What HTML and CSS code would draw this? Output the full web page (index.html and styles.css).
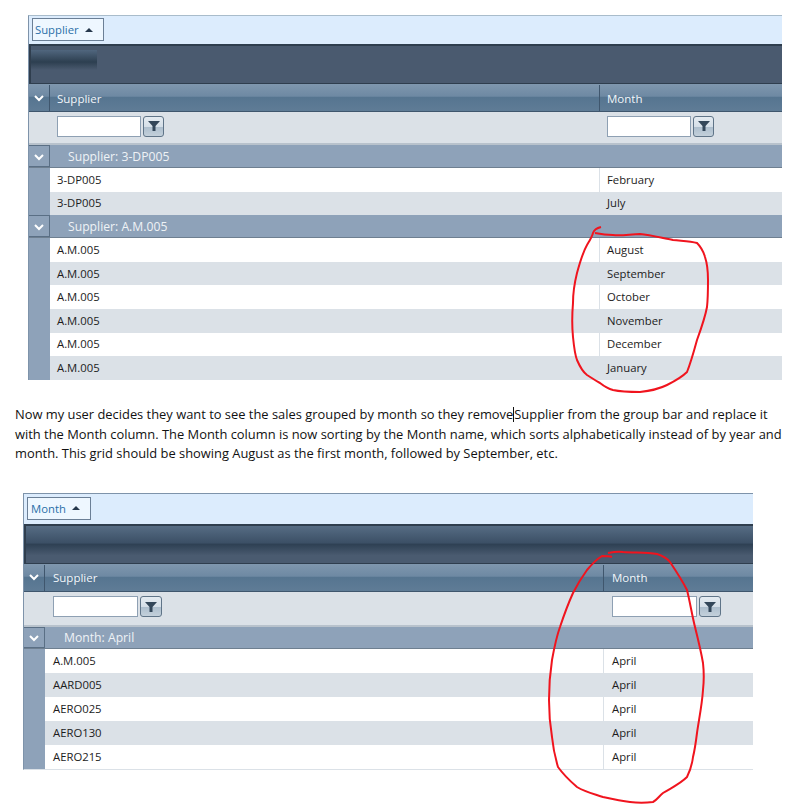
FILE: index.html
```html
<!DOCTYPE html>
<html lang="en">
<head>
<meta charset="utf-8">
<title>Grid grouping</title>
<link rel="stylesheet" href="styles.css">
</head>
<body>
<div class="page">
  <section class="grid grid-a">
    <div class="groupbar"><span class="chip">Supplier <svg class="tri" viewBox="0 0 8 4" width="8" height="4"><path d="M0 4 4 0 8 4z"/></svg></span></div>
    <div class="band"><div class="band-blur"></div></div>
    <div class="row header">
      <div class="strip"><svg class="chev" viewBox="0 0 10 7" width="10" height="7"><path d="M1 1 5 5 9 1"/></svg></div>
      <div class="col c1">Supplier</div><div class="col c2">Month</div>
    </div>
    <div class="row filter">
      <div class="strip"></div>
      <div class="col c1"><span class="input"></span><span class="fbtn"><svg viewBox="0 0 12 12" width="12" height="12"><path d="M0 1H12L7.500 6V11H4.500V6z"/></svg></span></div>
      <div class="col c2"><span class="input"></span><span class="fbtn"><svg viewBox="0 0 12 12" width="12" height="12"><path d="M0 1H12L7.500 6V11H4.500V6z"/></svg></span></div>
    </div>
    <div class="row group"><div class="strip"><svg class="chev" viewBox="0 0 10 7" width="10" height="7"><path d="M1 1 5 5 9 1"/></svg></div><div class="gtitle">Supplier: 3-DP005</div></div>
    <div class="row data"><div class="strip"></div><div class="col c1">3-DP005</div><div class="col c2">February</div></div>
    <div class="row data alt"><div class="strip"></div><div class="col c1">3-DP005</div><div class="col c2">July</div></div>
    <div class="row group"><div class="strip"><svg class="chev" viewBox="0 0 10 7" width="10" height="7"><path d="M1 1 5 5 9 1"/></svg></div><div class="gtitle">Supplier: A.M.005</div></div>
    <div class="row data"><div class="strip"></div><div class="col c1">A.M.005</div><div class="col c2">August</div></div>
    <div class="row data alt"><div class="strip"></div><div class="col c1">A.M.005</div><div class="col c2">September</div></div>
    <div class="row data"><div class="strip"></div><div class="col c1">A.M.005</div><div class="col c2">October</div></div>
    <div class="row data alt"><div class="strip"></div><div class="col c1">A.M.005</div><div class="col c2">November</div></div>
    <div class="row data"><div class="strip"></div><div class="col c1">A.M.005</div><div class="col c2">December</div></div>
    <div class="row data alt"><div class="strip"></div><div class="col c1">A.M.005</div><div class="col c2">January</div></div>
  </section>

  <p class="note">Now my user decides they want to see the sales grouped by month so they remove<span class="caret"></span>Supplier from the group bar and replace it<br>with the Month column. The Month column is now sorting by the Month name, which sorts alphabetically instead of by year and<br>month. This grid should be showing August as the first month, followed by September, etc.</p>

  <section class="grid grid-b">
    <div class="groupbar"><span class="chip">Month <svg class="tri" viewBox="0 0 8 4" width="8" height="4"><path d="M0 4 4 0 8 4z"/></svg></span></div>
    <div class="band"></div>
    <div class="row header">
      <div class="strip"><svg class="chev" viewBox="0 0 10 7" width="10" height="7"><path d="M1 1 5 5 9 1"/></svg></div>
      <div class="col c1">Supplier</div><div class="col c2">Month</div>
    </div>
    <div class="row filter">
      <div class="strip"></div>
      <div class="col c1"><span class="input"></span><span class="fbtn"><svg viewBox="0 0 12 12" width="12" height="12"><path d="M0 1H12L7.500 6V11H4.500V6z"/></svg></span></div>
      <div class="col c2"><span class="input"></span><span class="fbtn"><svg viewBox="0 0 12 12" width="12" height="12"><path d="M0 1H12L7.500 6V11H4.500V6z"/></svg></span></div>
    </div>
    <div class="row group"><div class="strip"><svg class="chev" viewBox="0 0 10 7" width="10" height="7"><path d="M1 1 5 5 9 1"/></svg></div><div class="gtitle">Month: April</div></div>
    <div class="row data"><div class="strip"></div><div class="col c1">A.M.005</div><div class="col c2">April</div></div>
    <div class="row data alt"><div class="strip"></div><div class="col c1">AARD005</div><div class="col c2">April</div></div>
    <div class="row data"><div class="strip"></div><div class="col c1">AERO025</div><div class="col c2">April</div></div>
    <div class="row data alt"><div class="strip"></div><div class="col c1">AERO130</div><div class="col c2">April</div></div>
    <div class="row data"><div class="strip"></div><div class="col c1">AERO215</div><div class="col c2">April</div></div>
  </section>

  <svg class="ink" viewBox="0 0 791 812" width="791" height="812">
    <path d="M601 227C597 228 594 230 593 233C592 237 590 240 587 245C583 252 580 262 577 273C574 285 573 295 573 303C572 315 572 327 573 337C574 347 575 355 577 360C580 367 583 372 587 375C592 378 596 381 600 383C605 387 609 389 613 390C622 392 631 392 640 392C650 391 659 389 667 385C675 381 682 377 687 372C691 362 694 351 697 340C701 329 705 318 707 307C708 298 708 289 708 280C708 271 707 263 705 257C703 250 700 246 697 243C690 241 682 241 673 240C662 238 651 235 640 234C631 234 622 236 613 235C606 235 600 234 595 233"/>
    <path d="M608 553C613 552 618 551 623 552C634 553 646 552 657 554C663 556 667 558 670 562C676 571 682 580 687 590C690 602 692 615 695 627C698 639 701 651 703 663C704 672 704 681 703 690C702 705 699 719 697 733C696 741 695 749 693 757C692 765 690 771 687 777C680 784 671 788 663 793C659 796 657 800 653 802C645 803 638 803 630 802C621 801 612 799 603 797C594 794 585 792 577 787C570 781 563 774 558 767C555 757 553 747 552 737C550 725 549 712 549 700C549 686 550 673 552 660C554 649 556 638 560 627C564 615 568 604 573 593C577 585 582 577 587 570C592 564 597 559 602 556C606 556 609 556 612 557"/>
  </svg>
</div>
</body>
</html>
```
FILE: styles.css
```css
* { box-sizing: border-box; }
html, body { margin: 0; background: #fff; }
body { font-family: "Open Sans", "Noto Sans", sans-serif; font-size: 11.3px; color: #1c1c1c; }
.page { position: relative; width: 791px; height: 812px; overflow: hidden; padding-top: 15px; }

.grid { display: flex; flex-direction: column; border-left: 1px solid #7e93aa; }
.grid-a { margin-left: 28px; width: 754px; border-top: 1px solid #a9bccb; --strip: 21px; --c1: 550px; --bar: 28px; --chip-top: 2px; --chip-pad: 2px; --filter: 33px; --group: 23px; --pad: 7px; --row: 23.6px; --row-lift: 1px; --btn: 21px; --input: 84px; --title: 18px; }
.grid-b { margin-left: 23px; margin-top: 29px; width: 730px; border-top: 1px solid #7e93aa; --strip: 21px; --c1: 559px; --bar: 30px; --chip-top: 3px; --chip-pad: 3px; --filter: 35px; --group: 22px; --pad: 8px; --row: 24px; --row-lift: 0px; --btn: 22px; --input: 85px; --title: 19px; border-bottom: 1px solid #dbe1e7; }

.groupbar { height: var(--bar); background: #dcecfd; padding: var(--chip-top) 0 0 3px; display: flex; align-items: flex-start; }
.chip { height: 23px; display: inline-flex; align-items: center; gap: 4px; padding: 0 10px 0 var(--chip-pad); font-size: 11.3px; color: #2a6fa8; background: #eef7ff; border: 1px solid #6b7f96; }
.tri { fill: #26384c; margin-left: 2px; }

.band { height: 40px; border: 2px solid #2f3e4e; border-width: 2px 0 1px 2px; background: linear-gradient(#566c84 0, #3c5066 45%, #2f4154 50%, #4a5b70 80%, #4a5b70 100%); }
.grid-a .band { background: #4a5a6f; }
.band-blur { width: 66px; height: 20px; margin-top: 4px; background: linear-gradient(#50667e, #2d3f50 60%, #4a5a6f); }

.row { display: flex; }
.strip { flex: 0 0 var(--strip); display: flex; align-items: center; justify-content: center; background: #8ea2b9; }
.col { display: flex; align-items: center; padding-left: var(--pad); }
.c1 { flex: 0 0 var(--c1); }
.c2 { flex: 1; }

.header { height: 28px; padding-top: 1px; color: #f2f6fa; font-size: 11.5px; background: linear-gradient(#7f97ae 0, #6e89a3 45%, #567590 50%, #5f7c96 100%); border-bottom: 1px solid #3f566d; }
.header .strip { background: none; border-right: 1px solid #3f566d; }
.header .c1 { border-right: 1px solid #3f566d; }
.chev { fill: none; stroke: #fff; stroke-width: 2; }

.filter { height: var(--filter); background: #dbe1e7; border-bottom: 2px solid #b8c2cc; }
.filter .strip { background: #dbe1e7; }
.filter .col { gap: 2px; padding-bottom: 3px; }
.input { width: var(--input); height: 21px; background: #fff; border: 1px solid #8ea0b3; }
.fbtn { width: var(--btn); height: 21px; display: flex; align-items: center; justify-content: center; border: 1px solid #5f7488; border-radius: 3px; background: linear-gradient(#e4ebf1 0, #d5dfe8 50%, #aebfce 55%, #c3d0db 100%); }
.fbtn svg { fill: #33475a; }

.group { height: var(--group); background: #8ea2b9; color: #eef2f6; border-bottom: 1px solid #6e7f90; }
.group .strip { border: 1px solid #5a6f85; border-left: 0; padding-top: 2px; }
.gtitle { padding: 1px 0 0 var(--title); display: flex; align-items: center; font-size: 12.2px; }

.data { height: var(--row); background: #fff; }
.data.alt { background: #dbe1e7; }
.data .col { padding-bottom: var(--row-lift); }
.data .c2 { border-left: 1px solid #dbe1e7; }
.data .c1 { flex-basis: calc(var(--c1) - 1px); }
.data.alt .c2 { border-left: 0; padding-left: calc(var(--pad) + 1px); }

.note { margin: 25.500px 0 0 15px; font-size: 12.9px; line-height: 19.5px; color: #111; white-space: nowrap; }
.caret { display: inline-block; width: 1px; height: 15px; background: #111; vertical-align: -3px; }

.ink { position: absolute; left: 0; top: 0; fill: none; stroke: #f0141e; stroke-width: 2; pointer-events: none; }
```
